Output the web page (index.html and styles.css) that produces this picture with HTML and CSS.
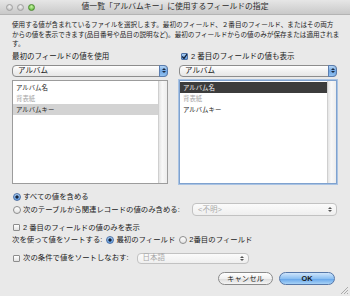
FILE: index.html
```html
<!DOCTYPE html>
<html lang="ja">
<head>
  <meta charset="UTF-8">
  <meta name="viewport" content="width=device-width, initial-scale=1.0">
  <title>値一覧の指定</title>
  <link rel="stylesheet" href="styles.css">
</head>
<body>
  <div id="dialog">
    <!-- タイトルバー -->
    <div class="titlebar">
      <div class="lights">
        <span class="light"></span>
        <span class="light"></span>
        <span class="light green"></span>
      </div>
      <div class="title">値一覧「アルバムキー」に使用するフィールドの指定</div>
      <div></div>
    </div>

    <div class="content">
      <p class="desc">使用する値が含まれているファイルを選択します。最初のフィールド、２番目のフィールド、またはその両方<br>からの値を表示できます(品目番号や品目の説明など)。最初のフィールドからの値のみが保存または適用されま<br>す。</p>

      <!-- フィールド選択 -->
      <div class="columns">
        <div class="col">
          <div class="label">最初のフィールドの値を使用</div>
          <div class="popup">
            <span class="popup-text">アルバム</span>
            <span class="stepper"><i class="up"></i><i class="down"></i></span>
          </div>
          <div class="list">
            <div class="rows">
              <div class="row">アルバム名</div>
              <div class="row dim">背表紙</div>
              <div class="row sel">アルバムキー</div>
            </div>
            <div class="scrollbar"></div>
          </div>
        </div>

        <div class="col">
          <div class="label"><span class="check on"></span>2 番目のフィールドの値も表示</div>
          <div class="popup">
            <span class="popup-text">アルバム</span>
            <span class="stepper"><i class="up"></i><i class="down"></i></span>
          </div>
          <div class="list focus">
            <div class="rows">
              <div class="row active">アルバム名</div>
              <div class="row dim">背表紙</div>
              <div class="row">アルバムキー</div>
            </div>
            <div class="scrollbar"></div>
          </div>
        </div>
      </div>

      <!-- オプション -->
      <div class="opt first"><span class="radio on"></span>すべての値を含める</div>
      <div class="opt tall">
        <span class="radio"></span>次のテーブルから関連レコードの値のみ含める:
        <div class="popup off wide">
          <span class="popup-text">&lt;不明&gt;</span>
          <span class="arrows"><i class="up"></i><i class="down"></i></span>
        </div>
      </div>
      <div class="opt gap"><span class="check"></span>2 番目のフィールドの値のみを表示</div>
      <div class="opt">
        次を使って値をソートする:
        <span class="radio on ml"></span>最初のフィールド
        <span class="radio ml"></span>2番目のフィールド
      </div>
      <div class="opt gap2">
        <span class="check"></span>次の条件で値をソートしなおす:
        <div class="popup off lang">
          <span class="popup-text">日本語</span>
          <span class="arrows"><i class="up"></i><i class="down"></i></span>
        </div>
      </div>

      <div class="buttons">
        <button class="btn">キャンセル</button>
        <button class="btn default">OK</button>
      </div>
    </div>

    <svg class="grip" width="9" height="9" viewBox="0 0 9 9">
      <path d="M8 1 L1 8 M8 4 L4 8 M8 7 L7 8" stroke="#9a9a9a" stroke-width="0.8"/>
    </svg>
  </div>
</body>
</html>
```

FILE: styles.css
```css
* {
  margin: 0;
  padding: 0;
  box-sizing: border-box;
}

body {
  width: 350px;
  height: 296px;
  overflow: hidden;
  background: #e9e9e9;
  font-family: 'Liberation Sans', 'Noto Sans CJK JP', sans-serif;
  color: #1a1a1a;
}

#dialog {
  position: relative;
  width: 350px;
  height: 296px;
}

.titlebar {
  height: 15px;
  display: grid;
  grid-template-columns: 1fr auto 1fr;
  align-items: center;
  background: linear-gradient(#e6e6e6, #c9c9c9);
  border-bottom: 1px solid #b4b4b4;
}

.lights {
  display: flex;
  gap: 4px;
  padding-left: 6px;
}

.light {
  width: 7px;
  height: 7px;
  border-radius: 50%;
  background: radial-gradient(circle at 50% 35%, #f2f2f2, #b8b8b8);
  border: 1px solid #a0a0a0;
}

.light.green {
  background: radial-gradient(circle at 50% 35%, #c8f5a4, #4fae2c);
  border-color: #4c8a30;
}

.title {
  font-size: 7.8px;
  line-height: 10px;
  color: #2a2a2a;
}

.content {
  padding: 0 13px 0 12px;
}

.desc {
  padding-top: 5px;
  font-size: 6.6px;
  line-height: 9.5px;
  white-space: nowrap;
  color: #1e1e1e;
}

.columns {
  display: grid;
  grid-template-columns: 156px 158px;
  column-gap: 11px;
  margin-top: 3px;
}

.label {
  height: 10px;
  display: flex;
  align-items: center;
  font-size: 7.5px;
  line-height: 10px;
}

.col:last-child .label {
  padding-left: 1px;
}

.popup {
  display: flex;
  align-items: center;
  justify-content: space-between;
  height: 12px;
  margin-top: 3px;
  padding-left: 5px;
  border: 1px solid #8c8c8c;
  border-radius: 4px;
  background: linear-gradient(#ffffff, #f1f1f1 50%, #e6e6e6);
  font-size: 7.5px;
}

.popup-text {
  line-height: 10px;
}

.stepper {
  width: 9px;
  height: 12px;
  margin-right: -1px;
  display: flex;
  flex-direction: column;
  justify-content: center;
  align-items: center;
  gap: 1px;
  border: 1px solid #5a7db0;
  border-radius: 0 4px 4px 0;
  background: linear-gradient(#b7d6f5, #6ea6e4 50%, #93c2f0);
}

.up, .down {
  display: block;
  width: 0;
  height: 0;
  border-left: 2px solid transparent;
  border-right: 2px solid transparent;
}

.up {
  border-bottom: 2px solid #1c2a40;
}

.down {
  border-top: 2px solid #1c2a40;
}

.list {
  display: flex;
  height: 104px;
  margin-top: 3px;
  background: #fff;
  border: 1px solid #9c9c9c;
}

.list.focus {
  border: 1px solid #7fa2cf;
  box-shadow: 0 0 0 1px #a9c3e3;
}

.rows {
  flex: 1;
  padding-top: 1px;
}

.row {
  height: 11px;
  padding-left: 3px;
  font-size: 6.4px;
  line-height: 11px;
  color: #222;
}

.row.dim {
  color: #a6a6a6;
}

.row.sel {
  background: #d3d3d3;
}

.row.active {
  background: #3c3c3c;
  color: #f2f2f2;
}

.scrollbar {
  width: 9px;
  background: linear-gradient(90deg, #e4e4e4, #f8f8f8 40%, #ededed);
  border-left: 1px solid #cfcfcf;
}

.opt {
  display: flex;
  align-items: center;
  height: 10px;
  margin-top: 2px;
  font-size: 7.4px;
  line-height: 10px;
}

.opt.first {
  margin-top: 8px;
}

.opt.tall {
  height: 14px;
  margin-top: 1px;
}

.opt.gap {
  margin-top: 6px;
}

.opt.gap2 {
  height: 11px;
  margin-top: 8px;
}

.radio {
  width: 8px;
  height: 8px;
  margin: 0 2px 0 1px;
  border-radius: 50%;
  border: 1px solid #8d8d8d;
  background: linear-gradient(#ffffff, #e2e2e2);
  flex-shrink: 0;
}

.radio.on {
  border-color: #4f72a6;
  background: radial-gradient(circle, #16233a 0 1.4px, transparent 1.8px), linear-gradient(#a9cdf2, #5d9ae0);
}

.radio.ml {
  margin-left: 4px;
}

.check {
  width: 7px;
  height: 7px;
  margin: 0 3px 0 1px;
  border: 1px solid #8d8d8d;
  border-radius: 1px;
  background: linear-gradient(#ffffff, #e2e2e2);
  flex-shrink: 0;
}

.check.on {
  border-color: #4f72a6;
  background: url("data:image/svg+xml,%3Csvg xmlns='http://www.w3.org/2000/svg' viewBox='0 0 7 7'%3E%3Cpath d='M1.2 3.4 L3 5.4 L6.4 0.6' fill='none' stroke='%23152238' stroke-width='1.3'/%3E%3C/svg%3E") center/7px no-repeat, linear-gradient(#a9cdf2, #5d9ae0);
}

.popup.off {
  margin-top: 0;
  border-color: #c2c2c2;
  background: linear-gradient(#fbfbfb, #efefef);
  color: #a8a8a8;
}

.popup.wide {
  margin-left: auto;
  width: 145px;
  height: 13px;
}

.popup.lang {
  margin-left: 8px;
  width: 112px;
  height: 11px;
}

.arrows {
  display: flex;
  flex-direction: column;
  gap: 1px;
  margin-right: 4px;
}

.arrows .up {
  border-bottom-color: #555;
}

.arrows .down {
  border-top-color: #555;
}

.buttons {
  display: flex;
  justify-content: flex-end;
  gap: 6px;
  margin-top: 8px;
  padding-right: 2px;
}

.btn {
  width: 55px;
  height: 13px;
  border: 1px solid #8a8a8a;
  border-radius: 7px;
  background: linear-gradient(#ffffff, #f0f0f0 50%, #dcdcdc 51%, #f4f4f4);
  font-family: inherit;
  font-size: 7.4px;
  line-height: 11px;
  color: #1a1a1a;
}

.btn.default {
  width: 56px;
  border-color: #5677a8;
  background: linear-gradient(#cfe5fb, #8dc0f2 50%, #62a3ea 51%, #a8d2f6);
  font-weight: bold;
}

.grip {
  position: absolute;
  right: 1px;
  bottom: 1px;
}
```
